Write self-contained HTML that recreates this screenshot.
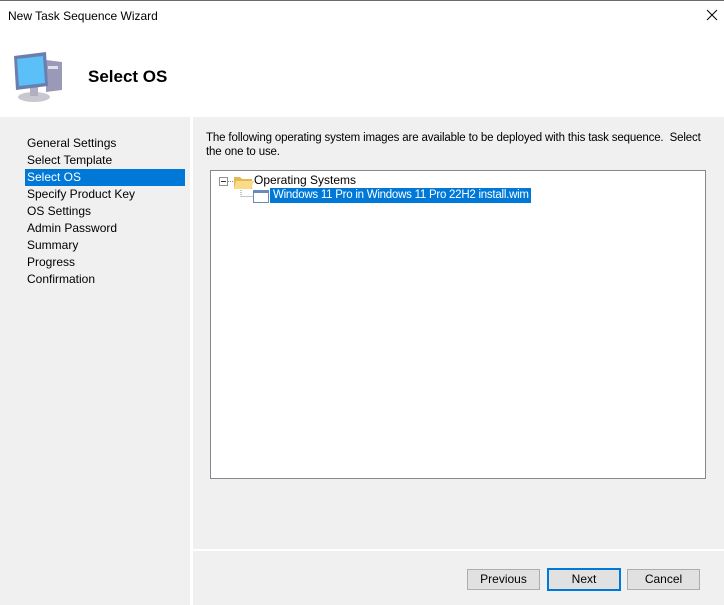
<!DOCTYPE html>
<html><head><style>
body{margin:0;width:724px;height:605px;overflow:hidden;background:#fff;font-family:"Liberation Sans",Arial,sans-serif;font-size:12px;color:#000;position:relative}
.a{position:absolute}
.btn{position:absolute;top:569px;width:71px;height:19px;border:1px solid #adadad;background:#e1e1e1;text-align:center;line-height:19px;font-size:12px}
.nav div{height:17px;line-height:17px;padding-left:2px}
</style></head><body>
<div class="a" style="left:0;top:0;width:724px;height:1px;background:#6b6b6b"></div>
<div class="a" style="left:8px;top:9px;font-size:12px">New Task Sequence Wizard</div>
<svg class="a" style="left:706px;top:9px" width="12" height="12"><path d="M1 1L11 11M11 1L1 11" stroke="#000" stroke-width="1"/></svg>
<svg class="a" style="left:12px;top:50px" width="54" height="54" viewBox="0 0 54 54">
<ellipse cx="22" cy="47" rx="16" ry="5" fill="#c8c8d0"/>
<rect x="18" y="36" width="8" height="10" fill="#b0b0c0"/>
<polygon points="34,10 50,12 50,40 34,42" fill="#9a9ab8"/>
<rect x="36" y="16" width="10" height="3" fill="#e0e0f0"/>
<polygon points="2,6 34,2 36,36 4,40" fill="#6a7fb0"/>
<polygon points="5,9 31,6 33,33 7,36" fill="#5cc0f8"/>
</svg>
<div class="a" style="left:88px;top:67px;font-size:17px;font-weight:bold">Select OS</div>
<div class="a" style="left:0;top:117px;width:190px;height:488px;background:#f0f0f0"></div>
<div class="a" style="left:193px;top:117px;width:531px;height:432px;background:#f0f0f0"></div>
<div class="a" style="left:193px;top:551px;width:531px;height:54px;background:#f0f0f0"></div>
<div class="a nav" style="left:25px;top:135px;width:160px">
<div>General Settings</div><div>Select Template</div><div style="background:#0078d7;color:#fff">Select OS</div><div>Specify Product Key</div><div>OS Settings</div><div>Admin Password</div><div>Summary</div><div>Progress</div><div>Confirmation</div>
</div>
<div class="a" style="left:206px;top:131px;line-height:14px;white-space:nowrap;font-size:11.5px;letter-spacing:-0.15px">The following operating system images are available to be deployed with this task sequence.&nbsp; Select<br>the one to use.</div>
<div class="a" style="left:210px;top:170px;width:494px;height:307px;background:#fff;border:1px solid #828790"></div>
<svg class="a" style="left:219px;top:174px" width="52" height="30">
<rect x="0.5" y="3.5" width="8" height="8" fill="#fff" stroke="#919191"/><path d="M2 7.5H7" stroke="#333"/>
<path d="M9 7.5H15M22 14V22.5H34" stroke="#888" stroke-dasharray="1,1" fill="none"/>
<path d="M15 3H21L23 5H33V15H15Z" fill="#e6b94e"/><path d="M17 7H35L32 15H15Z" fill="#f8dc8a"/>
<rect x="34.5" y="16.5" width="15" height="12" fill="#fff" stroke="#6a8ab8"/>
<rect x="35" y="17" width="14" height="2" fill="#6a8ab8"/>
</svg>
<div class="a" style="left:254px;top:173px">Operating Systems</div>
<div class="a" style="left:270px;top:188px;height:15px;width:258px;background:#0078d7;color:#fff;line-height:15px;padding-left:3px;white-space:nowrap;font-size:11.5px;letter-spacing:-0.25px;overflow:hidden">Windows 11 Pro in Windows 11 Pro 22H2 install.wim</div>
<div class="btn" style="left:467px">Previous</div>
<div class="btn" style="left:547px;border:2px solid #0078d7;top:568px;width:70px">Next</div>
<div class="btn" style="left:627px">Cancel</div>
</body></html>
